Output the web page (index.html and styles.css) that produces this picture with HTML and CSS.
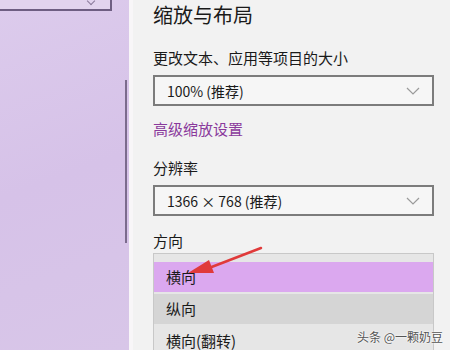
FILE: index.html
```html
<!DOCTYPE html>
<html lang="zh-CN">
<head>
  <meta charset="UTF-8">
  <title>缩放与布局</title>
  <link rel="stylesheet" href="styles.css">
</head>
<body>
<div class="sidebar">
  <div class="top-box"><span class="top-chev"></span></div>
  <div class="scrollbar"></div>
</div>
<div class="strip"></div>

<div class="main">
  <h1 class="title">缩放与布局</h1>

  <div class="label">更改文本、应用等项目的大小</div>
  <div class="select">
    <span>100% (推荐)</span>
    <svg class="chev" width="14" height="8" viewBox="0 0 14 8"><path d="M1 1 L7 7 L13 1" fill="none" stroke="#9a9a9a" stroke-width="1.2"/></svg>
  </div>

  <a class="link" href="#">高级缩放设置</a>

  <div class="label">分辨率</div>
  <div class="select">
    <span>1366 × 768 (推荐)</span>
    <svg class="chev" width="14" height="8" viewBox="0 0 14 8"><path d="M1 1 L7 7 L13 1" fill="none" stroke="#9a9a9a" stroke-width="1.2"/></svg>
  </div>

  <div class="label label-dir">方向</div>
  <div class="list">
    <div class="option selected">横向</div>
    <div class="option hover">纵向</div>
    <div class="option">横向(翻转)</div>
  </div>
</div>

<svg class="arrow" width="80" height="40" viewBox="0 0 80 40">
  <path d="M76 2 L24 22" stroke="#e03a3a" stroke-width="2.5" fill="none" stroke-linecap="round"/>
  <path d="M3 27 L24 14 L29 27 Z" fill="#e03a3a"/>
</svg>

<div class="watermark">头条 @一颗奶豆</div>
</body>
</html>
```

FILE: styles.css
```css
body {
  margin: 0;
  width: 450px;
  height: 350px;
  overflow: hidden;
  display: flex;
  background-color: #f2f2f2;
  font-family: "Noto Sans CJK SC", "Noto Sans", sans-serif;
  color: #1a1a1a;
}

.sidebar {
  width: 129px;
  flex-shrink: 0;
  background: linear-gradient(160deg, #dccbec 0%, #d6c2e8 50%, #d8c6e8 100%);
}

.top-box {
  width: 110px;
  height: 9px;
  border-right: 2px solid #6e5e82;
  border-bottom: 2px solid #6e5e82;
  background-color: #e2d4ee;
  position: relative;
}

.top-chev {
  position: absolute;
  right: 16px;
  top: -2px;
  width: 5px;
  height: 5px;
  border-right: 1px solid #8a7a9a;
  border-bottom: 1px solid #8a7a9a;
  transform: rotate(45deg);
}

.scrollbar {
  width: 2px;
  height: 163px;
  margin: 69px 0 0 125px;
  background-color: #7b6b8c;
}

.strip {
  width: 4px;
  flex-shrink: 0;
  background-color: #f8f6f8;
}

.main {
  flex: 1;
  padding-left: 20px;
  padding-right: 16px;
}

.title {
  margin: 0;
  font-size: 20px;
  font-weight: normal;
  line-height: 29px;
  color: #1a1a1a;
}

.label {
  font-size: 15px;
  line-height: 20px;
  margin-top: 19px;
}

.select {
  margin-top: 7px;
  height: 27px;
  border: 2px solid #7c7c7c;
  background-color: #f6f6f6;
  display: flex;
  align-items: center;
  justify-content: space-between;
  padding: 0 12px 0 12px;
  font-size: 14px;
}

.link {
  display: block;
  margin-top: 13px;
  font-size: 15px;
  line-height: 20px;
  color: #8a3a9c;
  text-decoration: none;
}

.label-dir {
  margin-top: 15px;
}

.list {
  margin-top: 2px;
  border: 1px solid #c8c8c8;
  border-bottom: none;
  background-color: #e6e6e6;
  padding-top: 8px;
  height: 100px;
}

.option {
  height: 30px;
  line-height: 30px;
  padding-left: 12px;
  font-size: 15px;
  margin-bottom: 2px;
}

.option.selected {
  background-color: #dba8ef;
}

.option.hover {
  background-color: #d5d5d5;
}

.arrow {
  position: absolute;
  left: 185px;
  top: 246px;
}

.watermark {
  position: absolute;
  left: 357px;
  top: 328px;
  font-size: 12px;
  color: #555;
  text-shadow: 0 0 2px #fff, 0 0 2px #fff;
}
```
